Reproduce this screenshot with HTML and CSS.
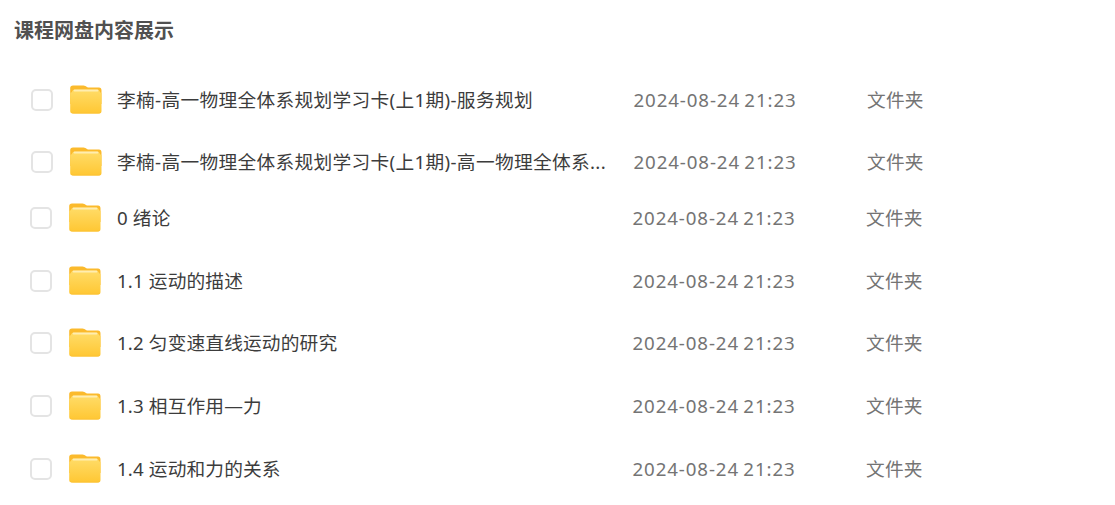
FILE: index.html
```
<!DOCTYPE html>
<html lang="zh-CN">
<head>
<meta charset="utf-8">
<title>课程网盘内容展示</title>
<link rel="stylesheet" href="styles.css">
</head>
<body>
<svg class="defs" width="0" height="0" aria-hidden="true">
  <defs>
    <linearGradient id="front" x1="0" y1="0" x2="0" y2="1"><stop offset="0" stop-color="#ffdc68"/><stop offset="1" stop-color="#ffc733"/></linearGradient>
    <symbol id="folder" viewBox="0 0 34 32">
      <path d="M1.200 4Q1.200 1.500 4 1.500H14.500Q16.500 1.500 18 3Q18.800 3.500 20 3.500H30Q32.500 3.500 32.500 6.500V20H1.200Z" fill="#fbba2c"/>
      <path d="M1.200 9Q3 8.500 3.500 6.700Q4 5.700 5.500 5.700H28Q29.800 5.700 30.300 6.700Q30.800 8.500 32.500 9V27Q32.500 29.500 30 29.500H4Q1.200 29.500 1.200 27Z" fill="url(#front)"/>
      <path d="M5.500 6.500H28.500" stroke="#ffedb0" stroke-width="1.800" stroke-linecap="round"/>
      <path d="M2.500 28.200Q3 29 4.500 29H29.500Q31 29 31.500 28.200" fill="none" stroke="#fcc235"/>
    </symbol>
  </defs>
</svg>
<main class="page">
  <h1 class="title">课程网盘内容展示</h1>
  <ul class="files files-top">
    <li class="file"><span class="check"></span><svg class="icon"><use href="#folder"/></svg><span class="name">李楠-高一物理全体系规划学习卡(上1期)-服务规划</span><time class="date">2024-08-24 21:23</time><span class="type">文件夹</span></li>
    <li class="file"><span class="check"></span><svg class="icon"><use href="#folder"/></svg><span class="name">李楠-高一物理全体系规划学习卡(上1期)-高一物理全体系...</span><time class="date">2024-08-24 21:23</time><span class="type">文件夹</span></li>
  </ul>
  <ul class="files files-chapters">
    <li class="file"><span class="check"></span><svg class="icon"><use href="#folder"/></svg><span class="name">0 绪论</span><time class="date">2024-08-24 21:23</time><span class="type">文件夹</span></li>
    <li class="file"><span class="check"></span><svg class="icon"><use href="#folder"/></svg><span class="name">1.1 运动的描述</span><time class="date">2024-08-24 21:23</time><span class="type">文件夹</span></li>
    <li class="file"><span class="check"></span><svg class="icon"><use href="#folder"/></svg><span class="name">1.2 匀变速直线运动的研究</span><time class="date">2024-08-24 21:23</time><span class="type">文件夹</span></li>
    <li class="file"><span class="check"></span><svg class="icon"><use href="#folder"/></svg><span class="name">1.3 相互作用—力</span><time class="date">2024-08-24 21:23</time><span class="type">文件夹</span></li>
    <li class="file"><span class="check"></span><svg class="icon"><use href="#folder"/></svg><span class="name">1.4 运动和力的关系</span><time class="date">2024-08-24 21:23</time><span class="type">文件夹</span></li>
  </ul>
</main>
</body>
</html>
```
FILE: styles.css
```
* { box-sizing: border-box; }
body { margin: 0; background: #fff; font-family: "Noto Sans", "Noto Sans CJK SC", sans-serif; }
.defs { display: block; }
.page { padding: 16px 0 0 14px; }
.title { margin: 0; font-size: 20px; line-height: 30px; font-weight: 700; color: #505050; }
.files { list-style: none; margin: 0; padding: 0; }
.files-top { padding: 23px 0 0 17px; }
.files-chapters { padding-left: 16px; }
.file {
  display: grid;
  grid-template-columns: 22px 34px 501px 233px 80px;
  align-items: center;
  height: 62.6px;
  font-size: 18.7px;
  line-height: 28px;
  white-space: nowrap;
}
.files-top .file { height: 62px; }
.files-chapters .file:first-child { height: 50px; margin-bottom: 6.5px; }
.check { width: 22px; height: 22px; border: 2px solid #e4e4e4; border-radius: 5px; }
.icon { width: 34px; height: 32px; margin-left: 16px; }
.name { margin-left: 31px; color: #3c3c3c; letter-spacing: 0.15px; }
.files-top .name { margin-left: 30px; letter-spacing: 0.33px; }
.date { margin-left: 45.5px; color: #747474; letter-spacing: 0.9px; word-spacing: -1.5px; }
.type { margin-left: 46px; color: #747474; letter-spacing: 0.2px; }
```
